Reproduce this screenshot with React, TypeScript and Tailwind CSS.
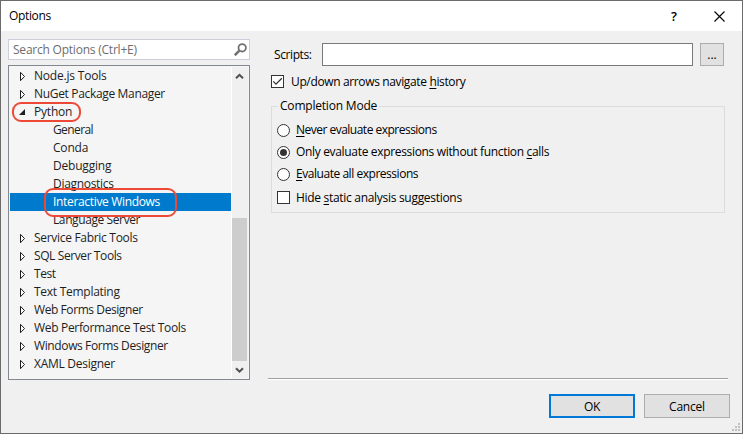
import type { ReactNode } from "react";

type Row = { label: string; kind: "closed" | "open" | "child"; selected?: boolean; track: string };

const rows: Row[] = [
  { label: "Node.js Tools", kind: "closed", track: "tracking-[-0.2px]" },
  { label: "NuGet Package Manager", kind: "closed", track: "tracking-[-0.33px]" },
  { label: "Python", kind: "open", track: "tracking-[-0.2px]" },
  { label: "General", kind: "child", track: "tracking-[-0.6px]" },
  { label: "Conda", kind: "child", track: "tracking-[-0.2px]" },
  { label: "Debugging", kind: "child", track: "tracking-[-0.2px]" },
  { label: "Diagnostics", kind: "child", track: "tracking-[-0.3px]" },
  { label: "Interactive Windows", kind: "child", selected: true, track: "tracking-[-0.33px]" },
  { label: "Language Server", kind: "child", track: "tracking-[-0.4px]" },
  { label: "Service Fabric Tools", kind: "closed", track: "tracking-[-0.3px]" },
  { label: "SQL Server Tools", kind: "closed", track: "tracking-[-0.4px]" },
  { label: "Test", kind: "closed", track: "tracking-[-0.4px]" },
  { label: "Text Templating", kind: "closed", track: "tracking-[-0.27px]" },
  { label: "Web Forms Designer", kind: "closed", track: "tracking-[-0.42px]" },
  { label: "Web Performance Test Tools", kind: "closed", track: "tracking-[-0.32px]" },
  { label: "Windows Forms Designer", kind: "closed", track: "tracking-[-0.38px]" },
  { label: "XAML Designer", kind: "closed", track: "tracking-[-0.27px]" },
];

function Expander({ kind }: { kind: Row["kind"] }) {
  if (kind === "child") return <span className="w-[43px] shrink-0" />;
  return (
    <svg className="w-6 h-[18px] shrink-0" viewBox="0 0 24 18">
      {kind === "open" ? (
        <path d="M15 6v6H9z" fill="#1e1e1e" />
      ) : (
        <path d="M10.5 5.3v8.4l4-4.2z" fill="#fff" stroke="#1e1e1e" />
      )}
    </svg>
  );
}

function TreeRow({ row }: { row: Row }) {
  return (
    <li className={`relative flex h-[18px] items-center text-[12px] whitespace-nowrap ${row.selected ? "bg-[#007acc] text-white" : "text-[#1e1e1e]"}`}>
      <Expander kind={row.kind} />
      <span className={`leading-[18px] ${row.track}`}>{row.label}</span>
      {row.label === "Python" && (
        <span className="absolute left-[2px] -top-px z-10 h-5 w-[69px] rounded-[9px] border-2 border-[#ee4937]" />
      )}
      {row.selected && (
        <span className="absolute left-[34px] -top-[5px] z-10 h-[29px] w-[133px] rounded-[9px] border-2 border-[#ee4937]" />
      )}
    </li>
  );
}

function CheckBox({ checked }: { checked?: boolean }) {
  return (
    <span className="size-[13px] shrink-0 border border-[#333] bg-white">
      {checked && (
        <svg viewBox="0 0 11 11" className="size-[11px]">
          <path d="M1.3 5.4 4 8.1 9.8 2.3" fill="none" stroke="#333" strokeWidth="1.3" />
        </svg>
      )}
    </span>
  );
}

function Radio({ checked, track, children }: { checked?: boolean; track: string; children: ReactNode }) {
  return (
    <label className="flex h-[22px] items-center gap-[6px]">
      <svg viewBox="0 0 13 13" className="size-[13px] shrink-0">
        <circle cx="6.5" cy="6.5" r="6" fill="#fff" stroke="#333" />
        {checked && <circle cx="6.5" cy="6.5" r="3.5" fill="#333" />}
      </svg>
      <span className={track}>{children}</span>
    </label>
  );
}

function Key({ children }: { children: ReactNode }) {
  return <span className="underline decoration-1 underline-offset-2">{children}</span>;
}

export default function App() {
  return (
    <div className="flex h-[434px] w-[743px] flex-col overflow-hidden border border-[#6b6b6b] bg-[#f0f0f0] font-['Open_Sans','Noto_Sans',sans-serif] text-[12px] leading-4 text-black whitespace-nowrap">
      <header className="flex h-[30px] shrink-0 items-center bg-white pl-2">
        <h1 className="tracking-[-0.35px]">Options</h1>
        <span className="ml-auto w-[10px] text-center text-[13px] font-semibold">?</span>
        <svg className="ml-[35px] mr-[17px] size-[11px]" viewBox="0 0 11 11">
          <path d="M.5 .5l10 10M10.5 .5l-10 10" stroke="#000" strokeWidth="1.1" />
        </svg>
      </header>

      <div className="flex h-[349px] shrink-0">
        <aside className="ml-[7px] mt-2 flex w-[242px] shrink-0 flex-col gap-[5px]">
          <div className="flex h-[21px] shrink-0 items-center justify-between border border-[#cccedb] bg-white pl-1 pr-[2px] text-[#6d6d6d]">
            <span className="tracking-[-0.22px]">Search Options (Ctrl+E)</span>
            <svg className="size-[13px]" viewBox="0 0 13 13">
              <circle cx="8.2" cy="4.8" r="3.7" fill="none" stroke="#717171" strokeWidth="1.8" />
              <path d="M5.3 7.7.8 12.2" stroke="#717171" strokeWidth="2.6" />
            </svg>
          </div>
          <div className="flex h-[315px] shrink-0 border border-[#828790] bg-[#f5f5f5] p-px">
            <ul className="w-[221px] shrink-0 bg-[#f5f5f5]">
              {rows.map((row) => (
                <TreeRow key={row.label} row={row} />
              ))}
            </ul>
            <div className="flex w-[17px] shrink-0 flex-col border-l border-white bg-[#f0f0f0]">
              <svg className="h-[151px] w-[15px] shrink-0" viewBox="0 0 15 151">
                <path d="M4 11.3 7.5 7.8l3.5 3.5" fill="none" stroke="#505050" strokeWidth="2" />
              </svg>
              <div className="h-[143px] w-[15px] bg-[#cdcdcd]" />
              <svg className="h-[17px] w-[15px] shrink-0" viewBox="0 0 15 17">
                <path d="M4 7.2l3.5 3.5L11 7.2" fill="none" stroke="#505050" strokeWidth="2" />
              </svg>
            </div>
          </div>
        </aside>

        <main className="ml-[18px] flex w-[460px] flex-col border-b border-white">
          <div className="flex h-[348px] flex-col border-b border-[#a0a0a0] pl-[3px]">
            <div className="mt-3 flex h-[23px] shrink-0 items-center pl-[3px]">
              <label className="w-12 tracking-[-0.4px]">Scripts:</label>
              <div className="h-[23px] w-[371px] border border-[#7a7a7a] bg-white" />
              <button className="ml-[7px] h-[23px] w-6 border border-[#adadad] bg-[#e1e1e1] leading-[20px]">...</button>
            </div>
            <label className="mt-[9px] flex h-[13px] shrink-0 items-center gap-[7px]">
              <CheckBox checked />
              <span className="tracking-[-0.36px]">Up/down arrows navigate <Key>h</Key>istory</span>
            </label>
            <section className="mt-[18px] flex h-[107px] w-[454px] shrink-0 flex-col border border-[#dcdcdc] pl-[5px]">
              <h2 className="-mt-[9px] ml-px h-4 self-start bg-[#f0f0f0] px-[2px] tracking-[-0.2px]">Completion Mode</h2>
              <div className="mt-[5px]">
                <Radio track="tracking-[-0.51px]"><Key>N</Key>ever evaluate expressions</Radio>
                <Radio checked track="tracking-[-0.33px]">Only evaluate expressions without function <Key>c</Key>alls</Radio>
                <Radio track="tracking-[-0.46px]"><Key>E</Key>valuate all expressions</Radio>
              </div>
              <label className="mt-[6px] flex h-[13px] items-center gap-[6px]">
                <CheckBox />
                <span className="tracking-[-0.3px]">Hide <Key>s</Key>tatic analysis suggestions</span>
              </label>
            </section>
          </div>
        </main>
      </div>

      <footer className="flex flex-1 items-start justify-end gap-[9px] pt-[14px]">
        <button className="h-6 w-[86px] border-2 border-[#0078d7] bg-[#e1e1e1] leading-[19px] tracking-[-0.3px]">OK</button>
        <button className="h-6 w-[86px] border border-[#adadad] bg-[#e1e1e1] leading-[21px] tracking-[-0.2px]">Cancel</button>
        <svg className="-ml-[7px] mr-[2px] mt-[29px] size-[8px]" viewBox="0 0 8 8" fill="#bfbfbf">
          <path d="M6 0h2v2H6zM3 3h2v2H3zM6 3h2v2H6zM0 6h2v2H0zM3 6h2v2H3zM6 6h2v2H6z" />
        </svg>
      </footer>
    </div>
  );
}
